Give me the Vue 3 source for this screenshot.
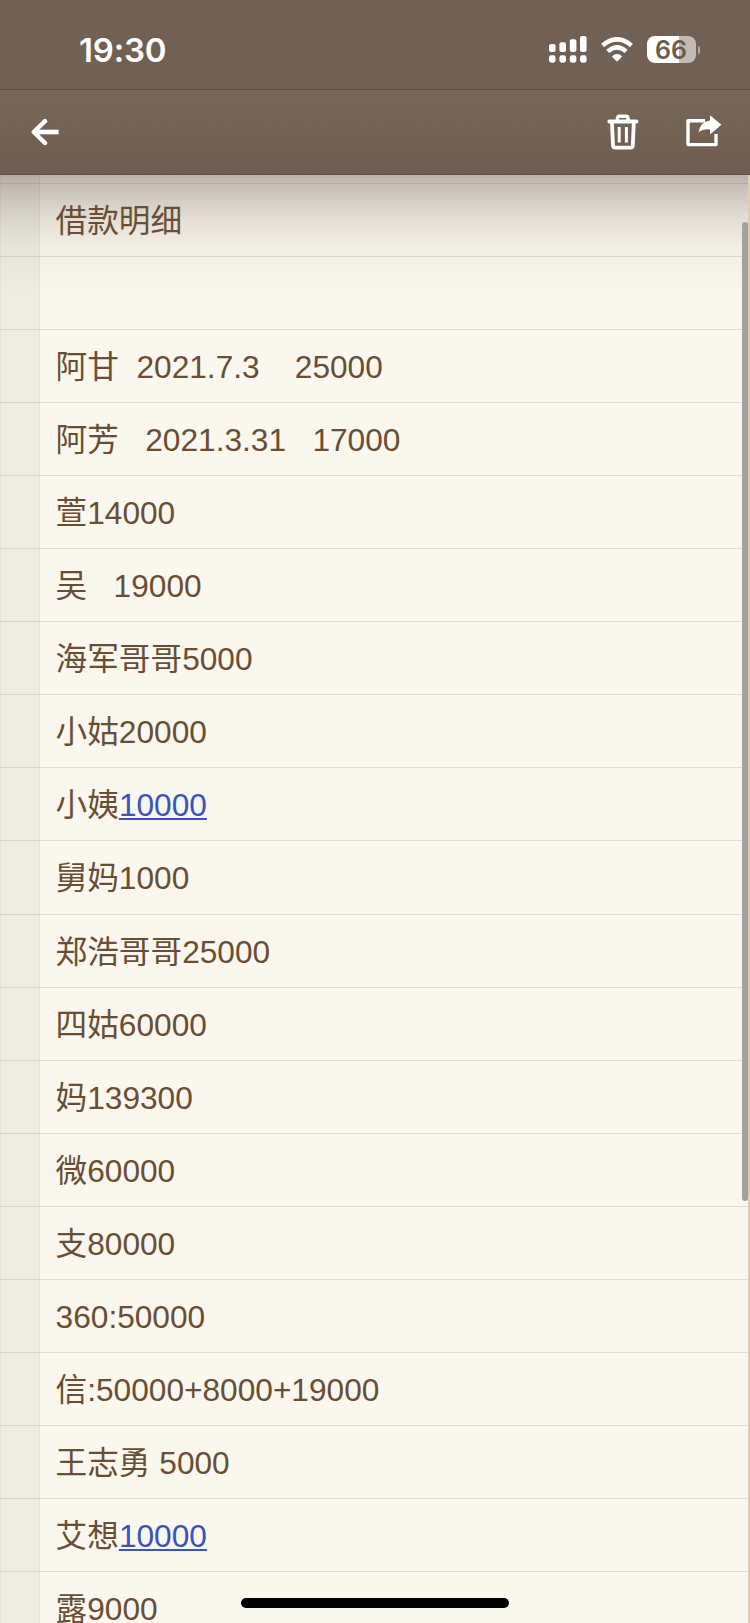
<script setup>
import { ref } from 'vue'

const time = ref('19:30')
const battery = ref(66)

// each line is text, optionally followed by an auto-detected number link
const lines = ref([
  { text: '借款明细' },
  { text: '' },
  { text: '阿甘  2021.7.3    25000' },
  { text: '阿芳   2021.3.31   17000' },
  { text: '萱14000' },
  { text: '吴   19000' },
  { text: '海军哥哥5000' },
  { text: '小姑20000' },
  { text: '小姨', link: '10000' },
  { text: '舅妈1000' },
  { text: '郑浩哥哥25000' },
  { text: '四姑60000' },
  { text: '妈139300' },
  { text: '微60000' },
  { text: '支80000' },
  { text: '360:50000' },
  { text: '信:50000+8000+19000' },
  { text: '王志勇 5000' },
  { text: '艾想', link: '10000' },
  { text: '露9000' },
])
</script>

<template>
  <div class="screen">
    <header class="status-bar">
      <span class="time">{{ time }}</span>

      <div class="status-icons">
        <svg class="signal" viewBox="0 0 38 27" width="38" height="27">
          <rect x="0" y="8" width="6.6" height="8" rx="2" />
          <rect x="10.4" y="6.3" width="6.6" height="9.7" rx="2" />
          <rect x="20.8" y="3.3" width="6.6" height="12.7" rx="2" />
          <rect x="31" y="0" width="6.6" height="16" rx="2" />
          <rect x="0" y="19.3" width="6.6" height="7.4" rx="2.4" />
          <rect x="10.4" y="19.3" width="6.6" height="7.4" rx="2.4" />
          <rect x="20.8" y="19.3" width="6.6" height="7.4" rx="2.4" />
          <rect x="31" y="19.3" width="6.6" height="7.4" rx="2.4" />
        </svg>

        <svg class="wifi" viewBox="0 0 32 25" width="32" height="25">
          <path d="M1.6 8.4 Q16 -3.8 30.4 8.4" fill="none" stroke="#fff" stroke-width="4.6" />
          <path d="M6.8 14.4 Q16 6.2 25.2 14.4" fill="none" stroke="#fff" stroke-width="4.6" />
          <path d="M16 24.8 L10.8 19.4 Q16 14.8 21.2 19.4 Z" fill="#fff" />
        </svg>

        <div class="battery">
          <span class="battery-body">{{ battery }}</span>
          <span class="battery-cap"></span>
        </div>
      </div>
    </header>

    <nav class="toolbar">
      <button type="button" class="back">
        <svg viewBox="0 0 30 28" width="30" height="28" fill="none" stroke="#fff">
          <path d="M15 3.2 L3.8 14 L15 25" stroke-width="4.4" stroke-linejoin="round" stroke-linecap="round" />
          <path d="M4 14 H28.6" stroke-width="4.6" />
        </svg>
      </button>

      <div class="actions">
        <button type="button">
          <svg viewBox="0 0 32 36" width="32" height="36" fill="none" stroke="#fff">
            <path d="M10.4 6 V4 Q10.4 2.2 12.4 2.2 H19 Q21 2.2 21 4 V6" stroke-width="3.4" />
            <path d="M2.4 7.4 H29.4" stroke-width="4" stroke-linecap="round" />
            <path d="M5 9 L6 31.4 Q6.1 33.6 8.2 33.6 H23.6 Q25.7 33.6 25.8 31.4 L26.8 9" stroke-width="3.8" />
            <path d="M12.2 13 V28.4 M19.4 13 V28.4" stroke-width="3" />
          </svg>
        </button>

        <button type="button" class="share">
          <svg viewBox="0 0 36 32" width="36" height="32">
            <path d="M19 5.8 H2 V29.6 H30 V19" fill="none" stroke="#fff" stroke-width="3.4" stroke-linejoin="round" />
            <path d="M24 .2 L35.4 9.8 L24 19.6 V14.4 Q17 13.6 12.6 17.4 Q14.2 6.4 24 5.4 Z" fill="#fff" />
          </svg>
        </button>
      </div>
    </nav>

    <main class="paper">
      <div class="sheet-top"></div>
      <p v-for="(line, i) in lines" :key="i" class="line">
        {{ line.text }}<a v-if="line.link">{{ line.link }}</a>
      </p>
      <div class="shade"></div>
      <div class="scrollbar"></div>
    </main>

    <div class="home-indicator"></div>
  </div>
</template>

<style>
body {
  margin: 0;
  overflow: hidden;
}
</style>

<style scoped>
.screen {
  position: relative;
  display: flex;
  flex-direction: column;
  width: 750px;
  height: 1623px;
  overflow: hidden;
  background: #faf7ee;
}

.status-bar {
  box-sizing: border-box;
  flex: none;
  display: flex;
  justify-content: space-between;
  align-items: center;
  height: 90px;
  padding: 10px 50px 0 79px;
  background:
    repeating-linear-gradient(90deg, rgba(255, 255, 255, 0.006) 0 3px, transparent 3px 11px, rgba(0, 0, 0, 0.008) 11px 12px, transparent 12px 19px),
    #716154;
  border-bottom: 1px solid #5e4f43;
}

.time {
  color: #fff;
  font-family: Inter, sans-serif;
  font-size: 33px;
  font-weight: 600;
  letter-spacing: -0.2px;
}

.status-icons {
  display: flex;
  align-items: center;
}

.signal {
  fill: #fff;
}

.wifi {
  margin-left: 14px;
}

.battery {
  display: flex;
  align-items: center;
  gap: 2px;
  margin-left: 14px;
}

.battery-body {
  box-sizing: border-box;
  width: 49px;
  height: 27px;
  padding-right: 1px;
  border-radius: 8px;
  background: linear-gradient(90deg, #fff 66%, #c3bab4 66%);
  color: #6b5c50;
  font-family: Inter, sans-serif;
  font-size: 25px;
  font-weight: 600;
  line-height: 28px;
  text-align: center;
}

.battery-cap {
  width: 2px;
  height: 8px;
  border-radius: 0 3px 3px 0;
  background: #b5aaa1;
}

.toolbar {
  box-sizing: border-box;
  flex: none;
  display: flex;
  justify-content: space-between;
  align-items: center;
  height: 85px;
  padding: 0 28px 0 30px;
  background:
    repeating-linear-gradient(90deg, rgba(255, 255, 255, 0.006) 0 3px, transparent 3px 11px, rgba(0, 0, 0, 0.008) 11px 12px, transparent 12px 19px),
    linear-gradient(#776759, #736354 45%, #6e5d50);
  border-bottom: 1px solid #5f4d42;
}

button {
  display: block;
  padding: 0;
  border: none;
  background: none;
}

button svg {
  display: block;
}

.actions {
  display: flex;
  align-items: center;
  gap: 47px;
}

.share {
  margin-bottom: 2px;
}

.paper {
  position: relative;
  flex: 1;
  overflow: hidden;
  border-right: 2px solid #dccdb6;
  background: linear-gradient(90deg, #ebe3d8 1px, #eeede2 1px 39px, #e4e1d7 39px 40px, #faf7ee 40px);
}

.sheet-top,
.line {
  box-sizing: border-box;
  border-bottom: 1px solid rgba(100, 80, 70, 0.16);
}

.sheet-top {
  height: 8.6px;
}

.line {
  height: 73.1px;
  margin: 0;
  padding: 1px 0 0 55.6px;
  color: #694e34;
  font-family: 'Liberation Sans', 'Noto Sans CJK SC', sans-serif;
  font-size: 31.65px;
  font-weight: 400;
  line-height: 72px;
  white-space: pre;
}

.line a {
  color: #3953c0;
  text-decoration: underline;
  text-decoration-thickness: 2px;
  text-underline-offset: 2px;
}

/* soft shadow cast by the toolbar on the paper */
.shade {
  position: absolute;
  top: 0;
  left: 0;
  right: 0;
  height: 120px;
  background: linear-gradient(
    rgba(97, 76, 70, 0.4),
    rgba(97, 76, 70, 0.31) 12%,
    rgba(97, 76, 70, 0.23) 23%,
    rgba(100, 90, 70, 0.14) 39%,
    rgba(100, 95, 70, 0.06) 60%,
    rgba(100, 95, 70, 0)
  );
}

.scrollbar {
  position: absolute;
  top: 47px;
  right: 0;
  width: 6px;
  height: 979px;
  border-radius: 3px;
  background: #a5a29c;
}

.home-indicator {
  position: absolute;
  left: 241px;
  bottom: 15px;
  width: 268px;
  height: 10px;
  border-radius: 5px;
  background: #000;
}
</style>
